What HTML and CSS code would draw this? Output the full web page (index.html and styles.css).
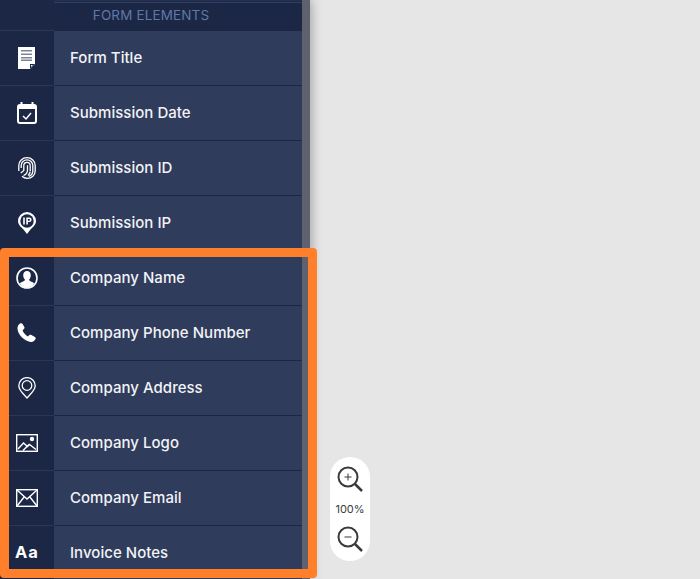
FILE: index.html
```html
<!DOCTYPE html>
<html lang="en">
<head>
<meta charset="utf-8">
<title>Form Elements</title>
<link rel="stylesheet" href="styles.css">
</head>
<body>
<div class="stage">
  <aside class="sidebar">
    <div class="panel">
      <div class="top-strip"><span class="top-left"></span><span class="top-right"></span></div>
      <div class="heading">FORM ELEMENTS</div>
      <ul class="list">
        <li class="row">
          <span class="icon"><svg width="18" height="22" viewBox="0 0 18 22"><path fill="#fff" d="M0 0h17v17l-5 5H0z"/><path fill="#7d8497" d="M3 3h11v1.500H3zM3 6.500h11V8H3zM3 10h11v1.500H3zM3 12.500h11V14H3z"/><path fill="#1c2745" d="M12 17h5l-5 5z"/><path fill="#fff" d="M13 18h2l-2 2z"/></svg></span>
          <span class="label">Form Title</span>
        </li>
        <li class="row">
          <span class="icon"><svg width="20" height="22" viewBox="0 0 20 22"><rect x="1" y="3" width="18" height="18" rx="2" fill="none" stroke="#fff" stroke-width="2"/><path fill="#fff" d="M1 3h18v4H1zM3.500 0h2v4h-2zM14.500 0h2v4h-2z"/><path fill="none" stroke="#fff" stroke-width="1.500" d="M6 14l3 3 5-6"/></svg></span>
          <span class="label">Submission Date</span>
        </li>
        <li class="row">
          <span class="icon"><svg width="18" height="22" viewBox="0 0 18 22" fill="none" stroke="#fff" stroke-width="1.300"><path d="M.8 14V8.500C.8 4 4.500.7 9 .7s8.200 3.300 8.200 7.800V14c0 4-3.500 7.300-8 7.300-2 0-3.800-.7-5.200-2"/><path d="M2.800 16l3-2.500V8.500C5.800 6.700 7.200 5.300 9 5.300s3.200 1.400 3.200 3.200V14"/><path d="M3.200 11V8.500C3.200 5.300 5.800 2.800 9 2.800s5.800 2.500 5.800 5.700V14c0 2.500-1.500 4.500-4 5.300"/><path d="M5.500 18.500c2.800-1 4-3 4-5.500V8.300M12.300 14.500c-.3 1.500-1 3-2.300 4"/></svg></span>
          <span class="label">Submission ID</span>
        </li>
        <li class="row">
          <span class="icon"><svg width="18" height="22" viewBox="0 0 18 22"><path fill="#fff" d="M9 0a9 9 0 0 1 9 9c0 3.800-3.500 6.500-5.500 8.500L9 22l-3.500-4.500C3.500 15.500 0 12.800 0 9a9 9 0 0 1 9-9z"/><circle cx="9" cy="9" r="6.700" fill="#1c2745"/><path fill="#fff" d="M5.200 5.500h1.600v7H5.200zM8.300 5.500h3a2.300 2.300 0 0 1 0 4.600H9.900v2.400H8.300zm1.600 1.400v1.900h1.200a.950.950 0 0 0 0-1.900z"/></svg></span>
          <span class="label">Submission IP</span>
        </li>
        <li class="row">
          <span class="icon"><svg width="22" height="22" viewBox="0 0 22 22"><circle cx="11" cy="11" r="10" fill="#1c2745" stroke="#fff" stroke-width="1.600"/><path fill="#fff" d="M11 4c2.400 0 3.800 1.800 3.800 4.300 0 1.800-.8 3.300-1.700 4.300 0 1 .6 1.500 1.800 2 1.400.5 2.500 1 3.200 1.900A10 10 0 0 1 11 21a10 10 0 0 1-7.100-4.500c.7-.9 1.800-1.400 3.200-1.900 1.200-.5 1.800-1 1.800-2-.9-1-1.700-2.500-1.700-4.300C7.200 5.800 8.600 4 11 4z"/></svg></span>
          <span class="label">Company Name</span>
        </li>
        <li class="row">
          <span class="icon"><svg width="20" height="20" viewBox="0 0 20 20"><path fill="#fff" d="M3 .5C4 0 5 0 5.600 1l1.700 3c.4.800.2 1.500-.4 2L5.600 7.200c.8 2.600 2.800 5 5.400 6.200l1.400-1.300c.6-.5 1.300-.6 2-.2l3.500 2c.9.600 1 1.500.5 2.300-1 1.800-2.800 3-4.800 2.700C7 18 1 11.500.5 6 .3 3.700 1.300 1.600 3 .5z"/></svg></span>
          <span class="label">Company Phone Number</span>
        </li>
        <li class="row">
          <span class="icon"><svg width="18" height="22" viewBox="0 0 18 22" fill="none" stroke="#fff" stroke-width="1.300"><path d="M9 21C6 17.500.8 13.500.8 8.800a8.200 8.200 0 0 1 16.400 0C17.200 13.500 12 17.500 9 21z"/><circle cx="9" cy="8.500" r="4.800"/></svg></span>
          <span class="label">Company Address</span>
        </li>
        <li class="row">
          <span class="icon"><svg width="22" height="18" viewBox="0 0 22 18" fill="none" stroke="#fff" stroke-width="1.400"><rect x=".7" y=".7" width="20.600" height="16.600"/><path d="M2 15l5.500-6 4 3.500 2-2 6.500 5"/><path d="M7 16.500l6-6"/><circle cx="16" cy="5" r="2.200" fill="#fff" stroke="none"/></svg></span>
          <span class="label">Company Logo</span>
        </li>
        <li class="row">
          <span class="icon"><svg width="22" height="18" viewBox="0 0 22 18" fill="none" stroke="#fff" stroke-width="1.400"><rect x=".7" y=".7" width="20.600" height="16.600"/><path d="M1 1l10 9 10-9M1 17l7.500-9.500M21 17l-7.500-9.500"/></svg></span>
          <span class="label">Company Email</span>
        </li>
        <li class="row">
          <span class="icon icon-text">Aa</span>
          <span class="label">Invoice Notes</span>
        </li>
      </ul>
    </div>
    <div class="scrollbar"></div>
  </aside>
  <div class="highlight"></div>
  <div class="zoom-pill">
    <svg width="26" height="26" viewBox="0 0 26 26" fill="none" stroke="#3a3a3c"><circle cx="11" cy="11" r="9.500" stroke-width="2"/><path stroke-width="2.500" d="M18 18l7 7"/><path stroke-width="1" d="M11 7.500v7M7.500 11h7"/></svg>
    <span class="zoom-value">100%</span>
    <svg width="26" height="26" viewBox="0 0 26 26" fill="none" stroke="#3a3a3c"><circle cx="11" cy="11" r="9.500" stroke-width="2"/><path stroke-width="2.500" d="M18 18l7 7"/><path stroke-width="1" d="M7.500 11h7"/></svg>
  </div>
</div>
</body>
</html>
```
FILE: styles.css
```css
* { box-sizing: border-box; }
html, body { margin: 0; padding: 0; height: 100%; }
body { background: #e6e6e6; overflow: hidden; font-family: "Inter", "Liberation Sans", sans-serif; }
.stage { position: relative; width: 700px; height: 579px; overflow: hidden; }
.sidebar { display: flex; width: 310px; height: 579px; box-shadow: 2px 0 10px rgba(0,0,0,.28); }
.panel { width: 302px; background: #2f3c5c; }
.scrollbar { width: 8px; background: #5f626e; }
.top-strip { display: flex; height: 3px; }
.top-left { width: 54px; background: #1c2745; }
.top-right { flex: 1; background: #1c2745; border-top: 1px solid #24324f; border-bottom: 1px solid #2e4068; }
.heading { height: 27px; line-height: 25px; background: #1c2745; color: #5f78a6; font-size: 13.5px; text-align: center; letter-spacing: .13px; }
.list { list-style: none; margin: 0; padding: 0; }
.row { display: flex; align-items: stretch; height: 55px; }
.icon { display: flex; align-items: center; justify-content: center; width: 54px; background: #1c2745; border-top: 1px solid #2b3755; padding-bottom: 1px; }
.icon-text { color: #fff; font-family: "Inter", sans-serif; font-weight: 700; font-size: 16.5px; letter-spacing: 1px; padding-bottom: 2px; }
.label { flex: 1; display: flex; align-items: center; padding: 0 0 2px 16px; color: #f2f3f6; font-size: 15px; font-weight: 500; letter-spacing: .03px; border-top: 1px solid #1c2745; }
.highlight { position: absolute; left: 0; top: 248px; width: 317px; height: 330px; border: 9px solid #ff7f2a; border-radius: 4px; }
.zoom-pill { position: absolute; left: 330px; top: 457px; width: 40px; height: 104px; border-radius: 20px; background: #fff; display: flex; flex-direction: column; align-items: center; padding-top: 9px; }
.zoom-value { font-size: 11px; color: #3a3a3c; line-height: 14px; margin: 10px 0; }
```
